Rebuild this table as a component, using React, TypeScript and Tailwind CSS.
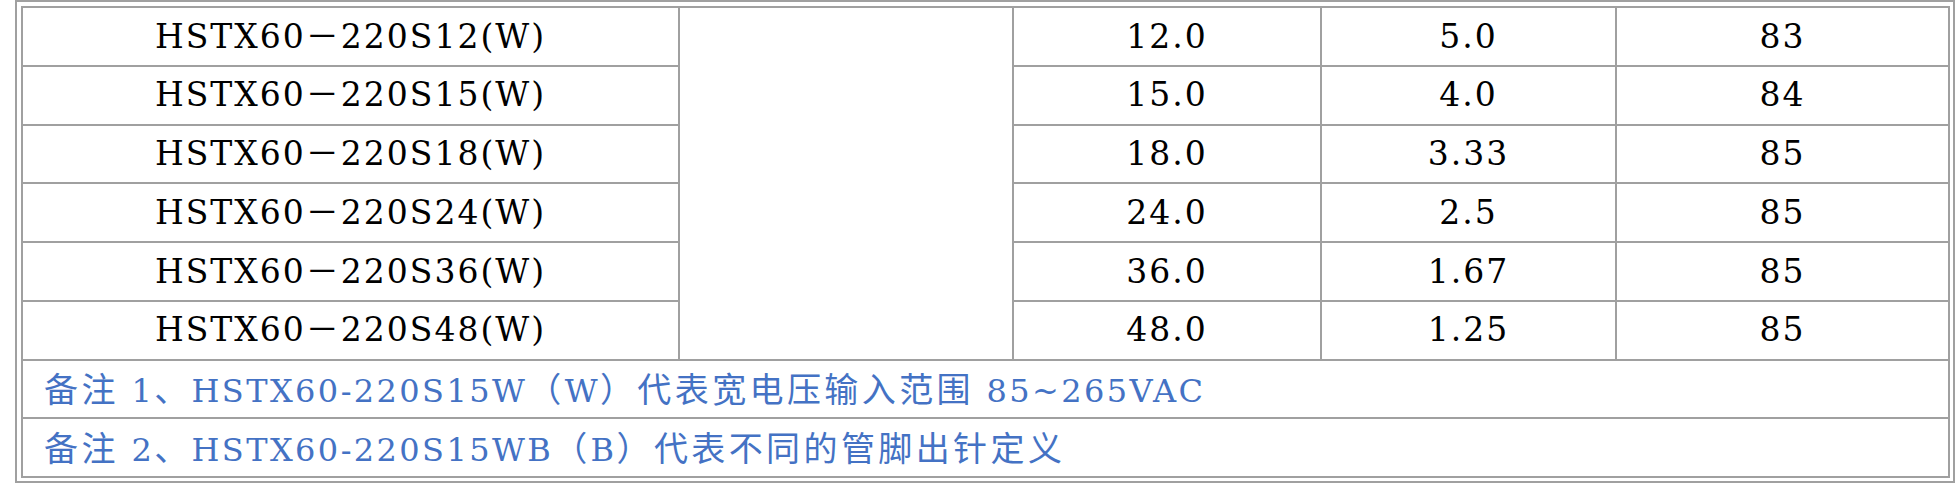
const rows = [
  { model: "HSTX60－220S12(W)", v: "12.0", a: "5.0", eff: "83" },
  { model: "HSTX60－220S15(W)", v: "15.0", a: "4.0", eff: "84" },
  { model: "HSTX60－220S18(W)", v: "18.0", a: "3.33", eff: "85" },
  { model: "HSTX60－220S24(W)", v: "24.0", a: "2.5", eff: "85" },
  { model: "HSTX60－220S36(W)", v: "36.0", a: "1.67", eff: "85" },
  { model: "HSTX60－220S48(W)", v: "48.0", a: "1.25", eff: "85" },
]

const notes = [
  "备注 1、HSTX60-220S15W（W）代表宽电压输入范围 85~265VAC",
  "备注 2、HSTX60-220S15WB（B）代表不同的管脚出针定义",
]

const cell = "border-2 border-[#a0a0a0] p-0 text-center text-[33px] tracking-[2px]"

// split a note into runs of CJK / latin so each gets its own face
function Note({ text }: { text: string }) {
  const parts = text.split(/([\u3000-\u303f\u4e00-\u9fff\uff00-\uffef]+)/).filter(Boolean)
  return (
    <>
      {parts.map((p, i) =>
        /[\u3000-\u303f\u4e00-\u9fff\uff00-\uffef]/.test(p) ? (
          <span key={i} className="font-['Noto_Sans_CJK_SC',sans-serif] text-[34px] tracking-[3.4px]">
            {p}
          </span>
        ) : (
          <span key={i} className="font-['DejaVu_Serif',serif] text-[32px] tracking-[2.4px]">
            {p}
          </span>
        )
      )}
    </>
  )
}

export default function App() {
  return (
    <div className="min-h-screen bg-white pl-[15px] pr-[5px]">
      <div className="border-2 border-[#a0a0a0] pt-[4px] pl-[4px] pr-[3px] pb-[3px]">
        <table className="w-full table-fixed border-collapse font-['DejaVu_Serif','Noto_Sans_CJK_SC',serif] text-black">
          <colgroup>
            <col className="w-[657px]" />
            <col className="w-[334px]" />
            <col className="w-[308px]" />
            <col className="w-[295px]" />
            <col />
          </colgroup>
          <tbody>
            {rows.map((r, i) => (
              <tr key={r.model} className="h-[58.75px]">
                <td className={cell}>{r.model}</td>
                {i === 0 && <td rowSpan={6} className="border-2 border-[#a0a0a0] p-0" />}
                <td className={cell}>{r.v}</td>
                <td className={cell}>{r.a}</td>
                <td className={cell}>{r.eff}</td>
              </tr>
            ))}
            {notes.map((n) => (
              <tr key={n} className="h-[58.75px]">
                <td colSpan={5} className="border-2 border-[#a0a0a0] py-0 pl-[21px] text-left text-[#4472c4]">
                  <Note text={n} />
                </td>
              </tr>
            ))}
          </tbody>
        </table>
      </div>
    </div>
  )
}
